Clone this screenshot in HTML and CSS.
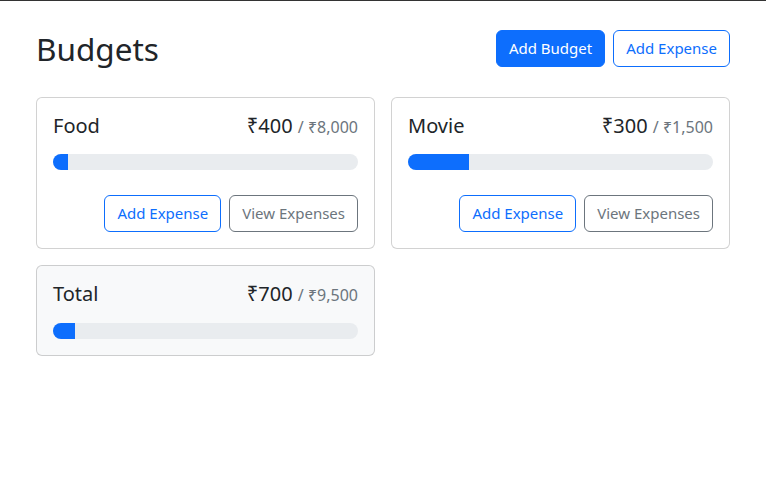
FILE: index.html
```html
<!DOCTYPE html>
<html lang="en">
<head>
<meta charset="utf-8">
<title>Budgets</title>
<link rel="stylesheet" href="styles.css">
</head>
<body>
<div class="topline"></div>
<div class="container">
  <div class="header">
    <h1 class="title">Budgets</h1>
    <div class="actions">
      <button class="btn btn-primary">Add Budget</button>
      <button class="btn btn-outline-primary">Add Expense</button>
    </div>
  </div>
  <div class="grid">
    <div class="card">
      <div class="card-head">
        <div class="name">Food</div>
        <div class="amount">₹400 <span class="max">/ ₹8,000</span></div>
      </div>
      <div class="progress"><div class="bar" style="width:5%"></div></div>
      <div class="card-actions">
        <button class="btn btn-outline-primary">Add Expense</button>
        <button class="btn btn-outline-secondary">View Expenses</button>
      </div>
    </div>
    <div class="card">
      <div class="card-head">
        <div class="name">Movie</div>
        <div class="amount">₹300 <span class="max">/ ₹1,500</span></div>
      </div>
      <div class="progress"><div class="bar" style="width:20%"></div></div>
      <div class="card-actions">
        <button class="btn btn-outline-primary">Add Expense</button>
        <button class="btn btn-outline-secondary">View Expenses</button>
      </div>
    </div>
    <div class="card card-light">
      <div class="card-head card-head-total">
        <div class="name">Total</div>
        <div class="amount">₹700 <span class="max">/ ₹9,500</span></div>
      </div>
      <div class="progress progress-last"><div class="bar" style="width:7.37%"></div></div>
    </div>
  </div>
</div>
</body>
</html>
```
FILE: styles.css
```css
* { box-sizing: border-box; }
html, body { margin: 0; padding: 0; }
body {
  font-family: "Noto Sans", "Open Sans", sans-serif;
  color: #212529;
  background: #fff;
  font-size: 16px;
  line-height: 1.5;
}
.topline { height: 1px; background: #333; }
.container { padding: 29px 36px 0 36px; }
.header {
  display: flex;
  justify-content: space-between;
  align-items: center;
  margin-bottom: 29px;
}
.title {
  margin: 0;
  font-size: 31.5px;
  font-weight: 400;
  line-height: 1.2;
}
.actions { display: flex; gap: 8px; }
.btn {
  font-family: inherit;
  font-size: 15px;
  line-height: 23px;
  padding: 6px 12px;
  border-radius: 6px;
  border: 1px solid transparent;
  background: #fff;
  cursor: pointer;
}
.btn-primary { background: #0d6efd; border-color: #0d6efd; color: #fff; }
.btn-outline-primary { border-color: #0d6efd; color: #0d6efd; }
.btn-outline-secondary { border-color: #6c757d; color: #6c757d; }
.grid {
  display: grid;
  grid-template-columns: 1fr 1fr;
  gap: 16px;
  align-items: start;
}
.card {
  border: 1px solid rgba(0,0,0,0.175);
  border-radius: 6px;
  padding: 16px;
  background: #fff;
}
.card-light { background: #f8f9fa; }
.card-head {
  display: flex;
  justify-content: space-between;
  align-items: baseline;
  margin-bottom: 16px;
  line-height: 1.2;
}
.card-head-total { margin-bottom: 17px; }
.name { font-size: 20px; }
.amount { font-size: 20px; }
.max { font-size: 16px; color: #6c757d; }
.progress {
  height: 16px;
  background: #e9ecef;
  border-radius: 8px;
  overflow: hidden;
  margin-bottom: 25px;
}
.progress-last { margin-bottom: 0; }
.bar { height: 100%; background: #0d6efd; }
.card-actions { display: flex; justify-content: flex-end; gap: 8px; }
```
